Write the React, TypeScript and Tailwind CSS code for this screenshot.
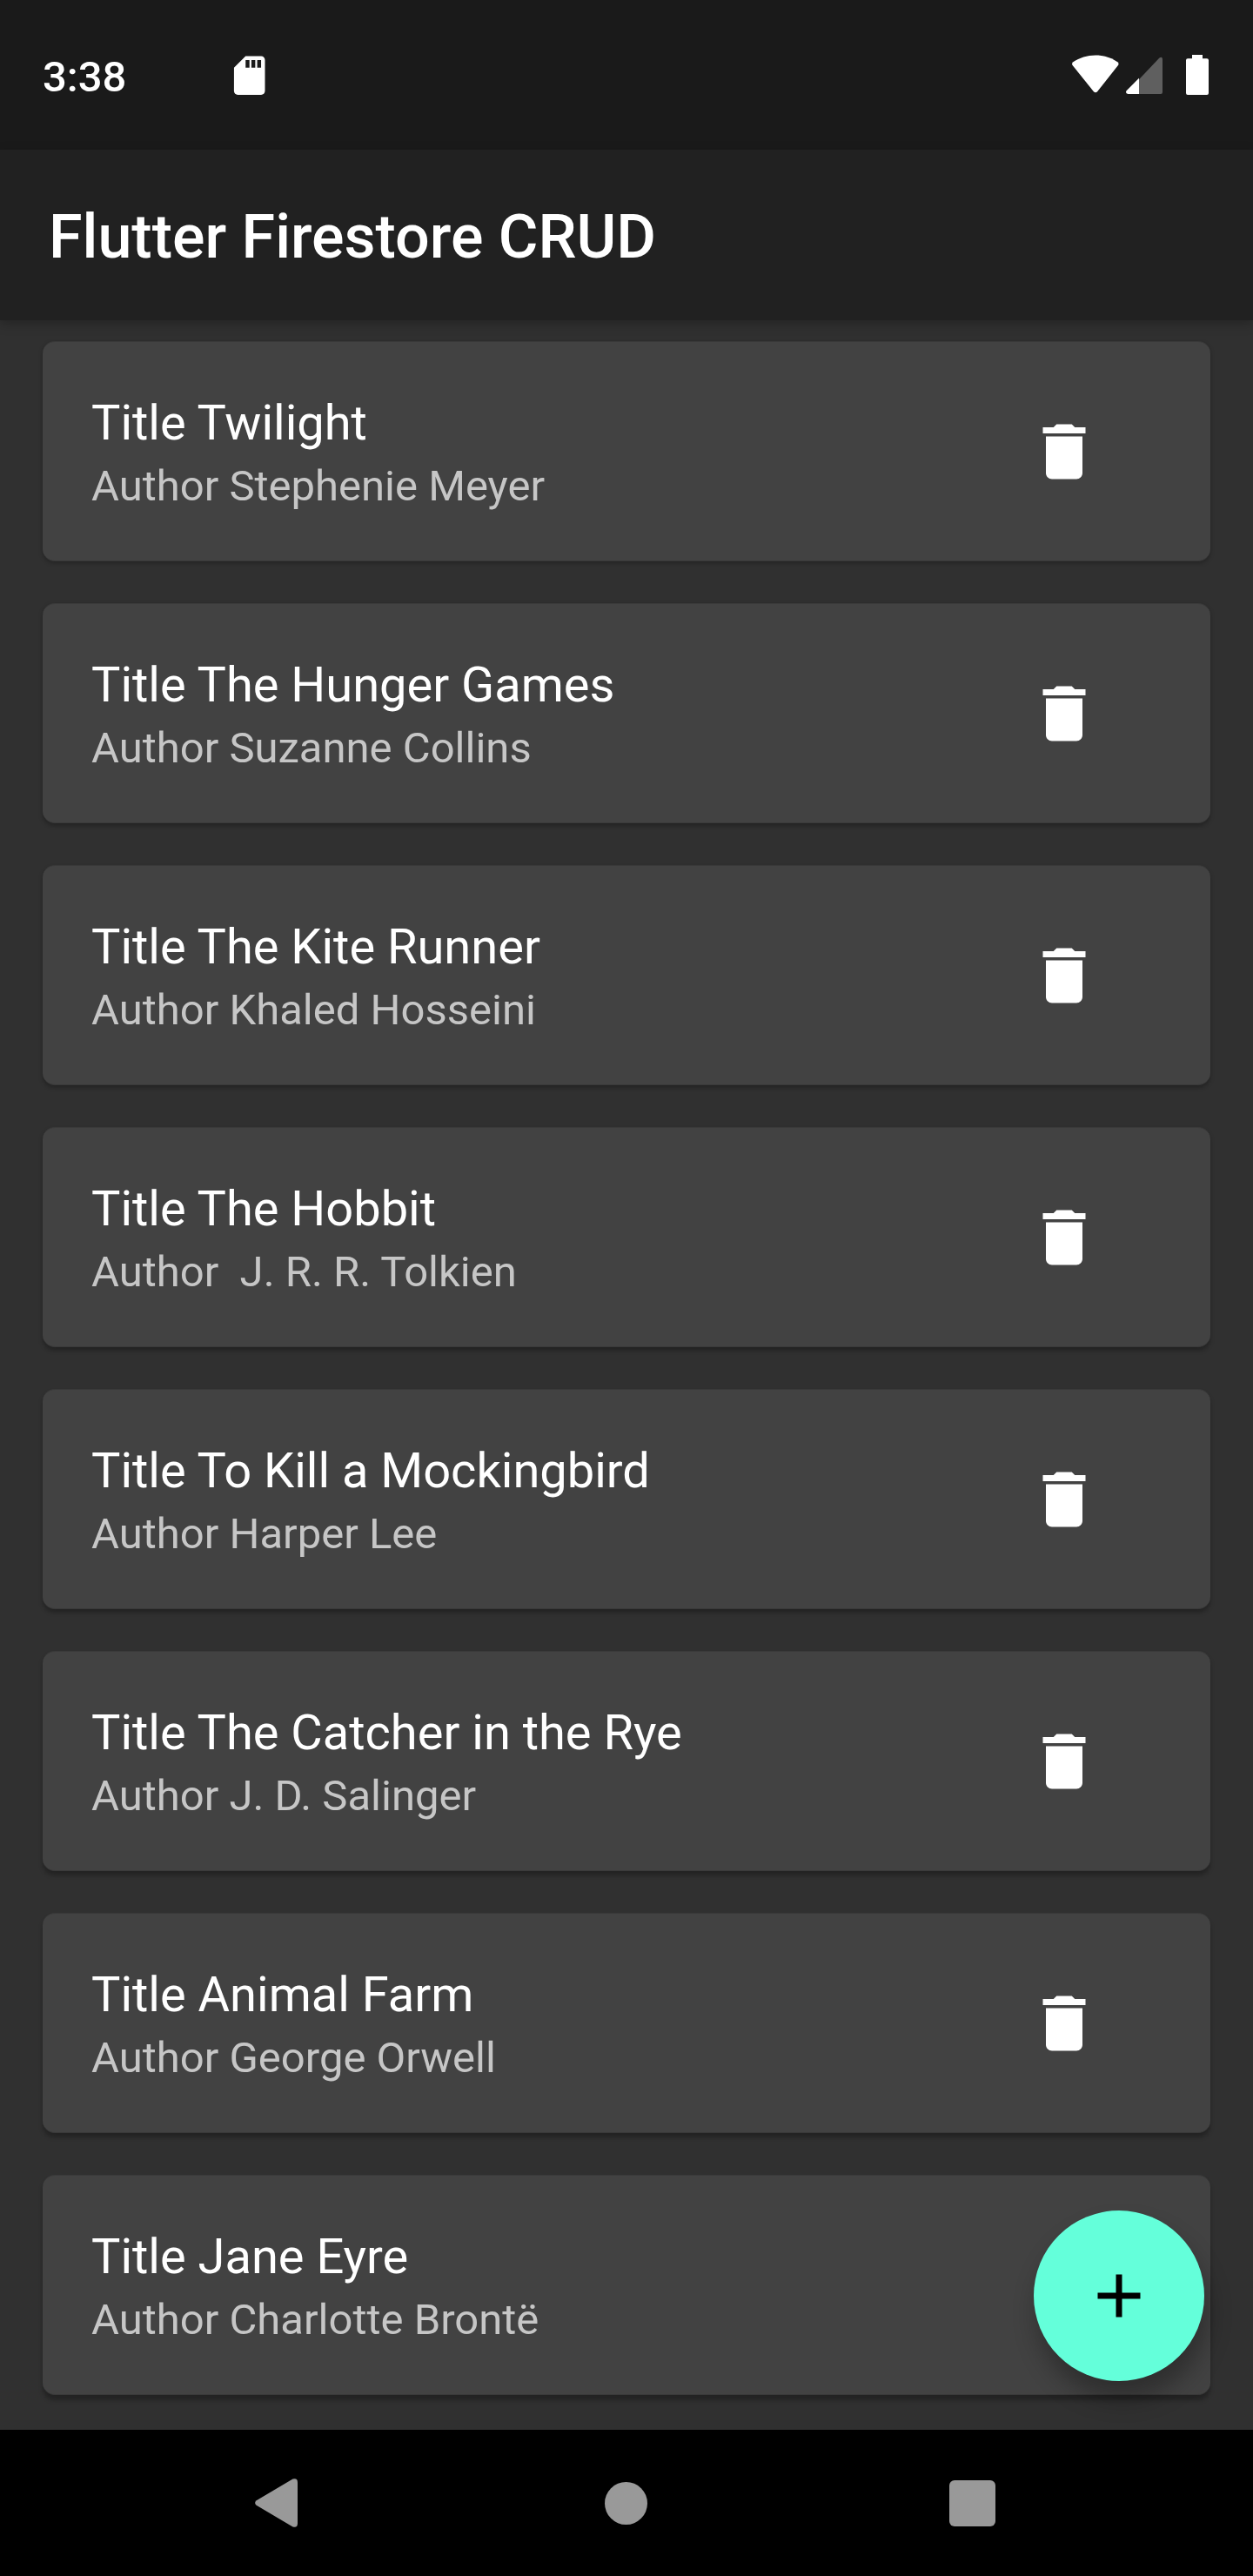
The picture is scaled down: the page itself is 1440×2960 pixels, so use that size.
const books = [
  { title: 'Twilight', author: 'Stephenie Meyer' },
  { title: 'The Hunger Games', author: 'Suzanne Collins' },
  { title: 'The Kite Runner', author: 'Khaled Hosseini' },
  { title: 'The Hobbit', author: ' J. R. R. Tolkien' },
  { title: 'To Kill a Mockingbird', author: 'Harper Lee' },
  { title: 'The Catcher in the Rye', author: 'J. D. Salinger' },
  { title: 'Animal Farm', author: 'George Orwell' },
  { title: 'Jane Eyre', author: 'Charlotte Brontë' },
];

function StatusBar() {
  return (
    <div className="flex h-[172px] shrink-0 items-start bg-[#1a1a1a] pl-[49px] pr-[51px]">
      <span className="mt-[59px] w-[211px] text-[49px] font-medium leading-[60px]">3:38</span>
      <svg className="mt-[59.6px] size-[53.4px]" viewBox="0 0 24 24" fill="#fff">
        <path d="M18 2h-8L4.02 8 4 20c0 1.1.9 2 2 2h12c1.1 0 2-.9 2-2V4c0-1.1-.9-2-2-2zm-6 6h-2V4h2v4zm3 0h-2V4h2v4zm3 0h-2V4h2v4z" />
      </svg>
      <svg className="ml-auto mt-[63px] h-[44px] w-[54px]" viewBox="0 0 54 44" fill="#fff">
        <path d="M27 .5C17.500 .5 8.500 3.300 1.300 8.300Q-.9 10 .8 12.300L24.900 42.200Q27 44.200 29.100 42.200L52.800 12.300Q54.400 10 52.300 8.300C45.100 3.300 36.500 .5 27 .5z" />
      </svg>
      <svg className="ml-[8px] mt-[65px] h-[43px] w-[42px]" viewBox="0 0 42 43">
        <path d="M15 26.300 38.200 1.800Q42 -.8 42 3.300V41Q42 43 40 43H15z" fill="#5f5f5f" />
        <path d="M15 24.800V43H2.400Q-1.200 42.300 .6 39.200z" fill="#fff" />
      </svg>
      <svg className="ml-[27px] mt-[63px] h-[46px] w-[26px]" viewBox="0 0 26 46" fill="#fff">
        <path d="M7 0h12v4.300h5q2 0 2 2V44q0 2-2 2H2q-2 0-2-2V6.300q0-2 2-2h5z" />
      </svg>
    </div>
  );
}

function BookCard({ title, author, index }: { title: string; author: string; index: number }) {
  const drop = 2 + index * 0.5;
  return (
    <li
      className="flex h-[253px] shrink-0 items-center rounded-[14px] border-y border-[#393939] bg-[#424242] pl-14 pr-[126px]"
      style={{ boxShadow: `0 ${drop}px 5px rgba(0,0,0,0.28)` }}
    >
      <div className="flex-1 self-start pt-[60px]">
        <p className="text-[56px] leading-[66px]">Title {title}</p>
        <p className="mt-[7px] whitespace-pre text-[49px] leading-[66px] text-[#c6c6c6]">
          {'Author ' + author}
        </p>
      </div>
      <button aria-label={`Delete ${title}`}>
        <svg className="size-[84px]" viewBox="0 0 24 24" fill="#fff">
          <path d="M6 19c0 1.100.9 2 2 2h8c1.100 0 2-.9 2-2V7H6v12zM19 4h-3.500l-1-1h-5l-1 1H5v2h14V4z" />
        </svg>
      </button>
    </li>
  );
}

function NavigationBar() {
  return (
    <nav className="flex h-[168px] shrink-0 items-center bg-black pl-[293px] pr-[296px]">
      <svg className="h-[56px] w-[49px]" viewBox="0 0 49 56" fill="#999">
        <path d="M1.300 25.500 43.500 .6Q49 -1 49 4.500V51.500Q49 57 43.500 55.400L1.300 30.500Q-1 28 1.300 25.500z" />
      </svg>
      <span className="ml-[353px] size-[49px] rounded-full bg-[#999]" />
      <span className="ml-auto size-[53px] rounded-[6px] bg-[#999]" />
    </nav>
  );
}

export default function App() {
  return (
    <div className="flex h-[2960px] w-[1440px] flex-col overflow-hidden bg-[#303030] font-['Roboto',sans-serif] text-white">
      <StatusBar />
      <header className="z-10 flex h-[196px] shrink-0 items-center bg-[#212121] px-14 pt-1 shadow-[0_4px_12px_rgba(0,0,0,0.25)]">
        <h1 className="text-[70px] font-medium leading-[84px]">Flutter Firestore CRUD</h1>
      </header>
      <main className="relative h-[2424px] shrink-0 overflow-hidden">
        <ul className="flex flex-col gap-12 px-[49px] pt-6">
          {books.map((book, i) => (
            <BookCard key={book.title} {...book} index={i} />
          ))}
        </ul>
        <button
          aria-label="Add book"
          className="absolute bottom-14 right-14 flex size-[196px] items-center justify-center rounded-full bg-[#64ffda] shadow-[4px_20px_28px_rgba(0,0,0,0.3)]"
        >
          <svg className="size-[84px]" viewBox="0 0 24 24" fill="#000">
            <path d="M19 13h-6v6h-2v-6H5v-2h6V5h2v6h6v2z" />
          </svg>
        </button>
      </main>
      <NavigationBar />
    </div>
  );
}
